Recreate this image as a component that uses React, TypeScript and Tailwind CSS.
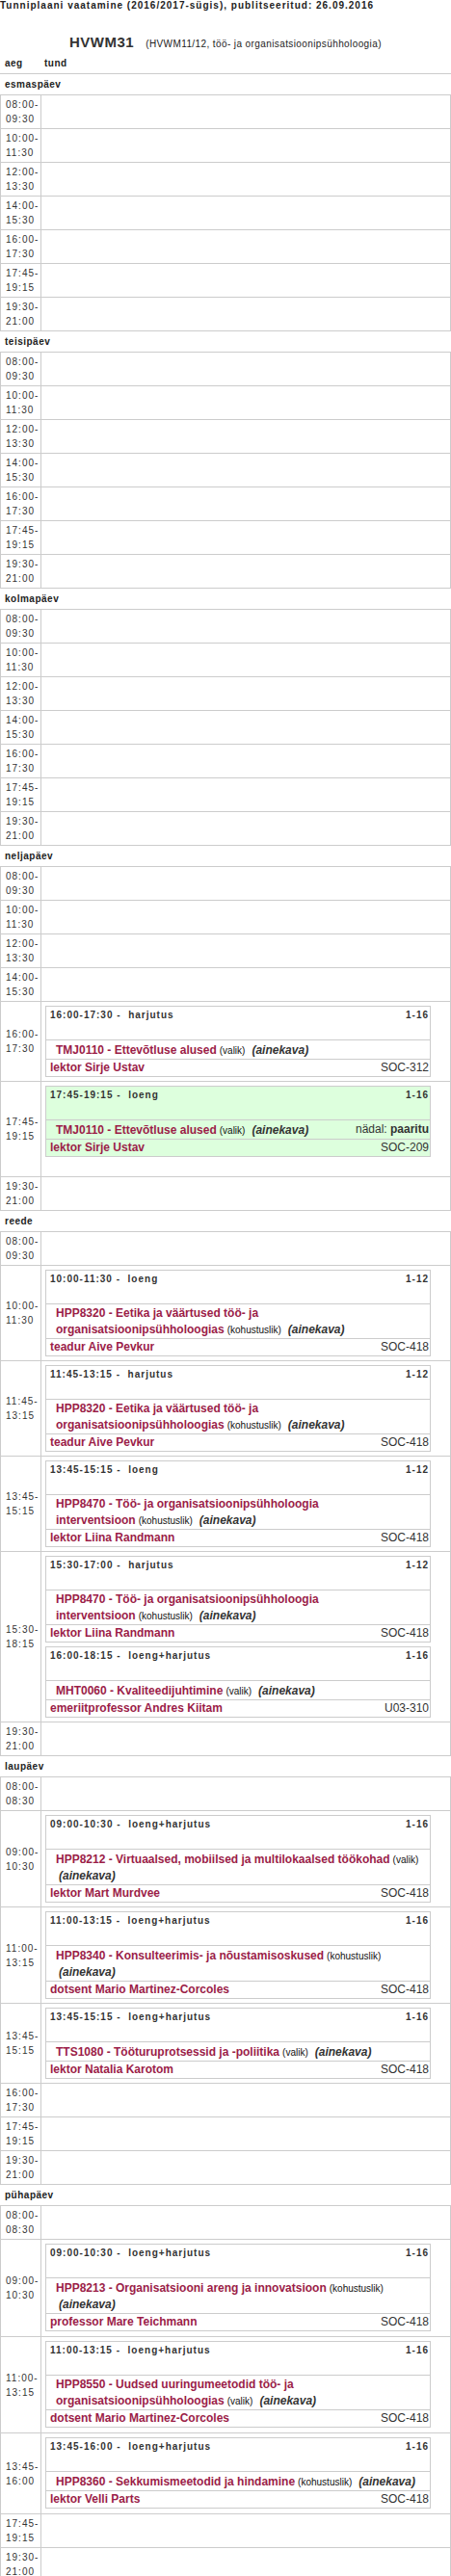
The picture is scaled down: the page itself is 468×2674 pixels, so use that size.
import React from "react";

type CardData = {
  time: string;
  type: string;
  weeks: string;
  l1: string;
  l2?: string;
  kind: string;
  ainekavaBreak?: boolean;
  teacher: string;
  room: string;
  green?: boolean;
  week?: string;
};

type RowData = { a: string; b: string; cards?: CardData[]; pb?: string };

type DayData = { name: string; rows: RowData[] };

const NAME = "font-bold text-[12px] text-[#9b1d48]";

function Kind({ k }: { k: string }) {
  return <span className="text-[10px] leading-[12px] font-normal text-[#111] ml-[3px]">({k})</span>;
}

function Aine({ cls }: { cls: string }) {
  return <span className={`text-[12px] font-bold italic text-[#333] ${cls}`}>(ainekava)</span>;
}

function CourseCell({ d }: { d: CardData }) {
  if (d.l2) {
    return (
      <div className="whitespace-nowrap">
        <div className={NAME}>{d.l1}</div>
        <div>
          <span className={NAME}>{d.l2}</span>
          <Kind k={d.kind} />
          <Aine cls="ml-[7px]" />
        </div>
      </div>
    );
  }
  if (d.ainekavaBreak) {
    return (
      <div className="whitespace-nowrap">
        <div>
          <span className={NAME}>{d.l1}</span>
          <Kind k={d.kind} />
        </div>
        <div className="pl-[3px]">
          <Aine cls="" />
        </div>
      </div>
    );
  }
  return (
    <div className="whitespace-nowrap">
      <span className={NAME}>{d.l1}</span>
      <Kind k={d.kind} />
      <Aine cls="ml-[7px]" />
    </div>
  );
}

function Card({ d }: { d: CardData }) {
  return (
    <div
      className={`ml-[4px] w-[400px] border border-[#cccccc] ${
        d.green ? "bg-[#ddffdd]" : "bg-white"
      }`}
    >
      <div className="h-[35px] flex justify-between items-start pl-[4px] pr-[1px] pt-[1px] text-[10px] leading-[16px] font-bold tracking-[1px] text-[#333] border-b border-[#cccccc]">
        <span className="whitespace-pre">{`${d.time} -  ${d.type}`}</span>
        <span>{d.weeks}</span>
      </div>
      <div className="flex justify-between items-start py-[1px] pl-[10px] pr-[1px] leading-[16px] border-b border-[#cccccc]">
        <CourseCell d={d} />
        {d.week ? (
          <div className="text-[12px] text-[#333] whitespace-nowrap">
            nädal: <span className="font-bold">{d.week}</span>
          </div>
        ) : null}
      </div>
      <div className="flex justify-between pl-[4px] pr-[1px] pb-[1px] leading-[16px] text-[12px]">
        <span className="font-bold text-[#9b1d48]">{d.teacher}</span>
        <span className="text-[#333]">{d.room}</span>
      </div>
    </div>
  );
}

function Row({ r }: { r: RowData }) {
  return (
    <div className="flex border-t border-[#cccccc]">
      <div className="w-[42px] shrink-0 border-r border-[#cccccc] pl-[5px] py-[2px] flex flex-col justify-center text-[10px] leading-[15px] tracking-[1px] text-[#333]">
        <span>{r.a}</span>
        <span>{r.b}</span>
      </div>
      {r.cards ? (
        <div className={`flex-1 pt-[4px] ${r.pb ?? "pb-[4px]"} flex flex-col gap-[4px]`}>
          {r.cards.map((c, i) => (
            <Card key={i} d={c} />
          ))}
        </div>
      ) : (
        <div className="flex-1" />
      )}
    </div>
  );
}

function Day({ d }: { d: DayData }) {
  return (
    <div>
      <div className="h-[21px] pl-[5px] text-[10px] leading-[21px] font-bold tracking-[0.5px] text-[#222]">
        {d.name}
      </div>
      <div className="border-l border-r border-b border-[#cccccc]">
        {d.rows.map((r, i) => (
          <Row key={i} r={r} />
        ))}
      </div>
    </div>
  );
}

const STD: RowData[] = [
  { a: "08:00-", b: "09:30" },
  { a: "10:00-", b: "11:30" },
  { a: "12:00-", b: "13:30" },
  { a: "14:00-", b: "15:30" },
  { a: "16:00-", b: "17:30" },
  { a: "17:45-", b: "19:15" },
  { a: "19:30-", b: "21:00" },
];

const HPP8320 = {
  l1: "HPP8320 - Eetika ja väärtused töö- ja",
  l2: "organisatsioonipsühholoogias",
  kind: "kohustuslik",
};

const HPP8470 = {
  l1: "HPP8470 - Töö- ja organisatsioonipsühholoogia",
  l2: "interventsioon",
  kind: "kohustuslik",
};

const DAYS: DayData[] = [
  { name: "esmaspäev", rows: STD },
  { name: "teisipäev", rows: STD },
  { name: "kolmapäev", rows: STD },
  {
    name: "neljapäev",
    rows: [
      STD[0],
      STD[1],
      STD[2],
      STD[3],
      {
        a: "16:00-",
        b: "17:30",
        cards: [
          {
            time: "16:00-17:30",
            type: "harjutus",
            weeks: "1-16",
            l1: "TMJ0110 - Ettevõtluse alused",
            kind: "valik",
            teacher: "lektor Sirje Ustav",
            room: "SOC-312",
          },
        ],
      },
      {
        a: "17:45-",
        b: "19:15",
        pb: "pb-[20px]",
        cards: [
          {
            time: "17:45-19:15",
            type: "loeng",
            weeks: "1-16",
            l1: "TMJ0110 - Ettevõtluse alused",
            kind: "valik",
            teacher: "lektor Sirje Ustav",
            room: "SOC-209",
            green: true,
            week: "paaritu",
          },
        ],
      },
      STD[6],
    ],
  },
  {
    name: "reede",
    rows: [
      STD[0],
      {
        a: "10:00-",
        b: "11:30",
        cards: [
          {
            time: "10:00-11:30",
            type: "loeng",
            weeks: "1-12",
            ...HPP8320,
            teacher: "teadur Aive Pevkur",
            room: "SOC-418",
          },
        ],
      },
      {
        a: "11:45-",
        b: "13:15",
        cards: [
          {
            time: "11:45-13:15",
            type: "harjutus",
            weeks: "1-12",
            ...HPP8320,
            teacher: "teadur Aive Pevkur",
            room: "SOC-418",
          },
        ],
      },
      {
        a: "13:45-",
        b: "15:15",
        cards: [
          {
            time: "13:45-15:15",
            type: "loeng",
            weeks: "1-12",
            ...HPP8470,
            teacher: "lektor Liina Randmann",
            room: "SOC-418",
          },
        ],
      },
      {
        a: "15:30-",
        b: "18:15",
        cards: [
          {
            time: "15:30-17:00",
            type: "harjutus",
            weeks: "1-12",
            ...HPP8470,
            teacher: "lektor Liina Randmann",
            room: "SOC-418",
          },
          {
            time: "16:00-18:15",
            type: "loeng+harjutus",
            weeks: "1-16",
            l1: "MHT0060 - Kvaliteedijuhtimine",
            kind: "valik",
            teacher: "emeriitprofessor Andres Kiitam",
            room: "U03-310",
          },
        ],
      },
      STD[6],
    ],
  },
  {
    name: "laupäev",
    rows: [
      { a: "08:00-", b: "08:30" },
      {
        a: "09:00-",
        b: "10:30",
        cards: [
          {
            time: "09:00-10:30",
            type: "loeng+harjutus",
            weeks: "1-16",
            l1: "HPP8212 - Virtuaalsed, mobiilsed ja multilokaalsed töökohad",
            kind: "valik",
            ainekavaBreak: true,
            teacher: "lektor Mart Murdvee",
            room: "SOC-418",
          },
        ],
      },
      {
        a: "11:00-",
        b: "13:15",
        cards: [
          {
            time: "11:00-13:15",
            type: "loeng+harjutus",
            weeks: "1-16",
            l1: "HPP8340 - Konsulteerimis- ja nõustamisoskused",
            kind: "kohustuslik",
            ainekavaBreak: true,
            teacher: "dotsent Mario Martinez-Corcoles",
            room: "SOC-418",
          },
        ],
      },
      {
        a: "13:45-",
        b: "15:15",
        cards: [
          {
            time: "13:45-15:15",
            type: "loeng+harjutus",
            weeks: "1-16",
            l1: "TTS1080 - Tööturuprotsessid ja -poliitika",
            kind: "valik",
            teacher: "lektor Natalia Karotom",
            room: "SOC-418",
          },
        ],
      },
      STD[4],
      STD[5],
      STD[6],
    ],
  },
  {
    name: "pühapäev",
    rows: [
      { a: "08:00-", b: "08:30" },
      {
        a: "09:00-",
        b: "10:30",
        pb: "pb-[5px]",
        cards: [
          {
            time: "09:00-10:30",
            type: "loeng+harjutus",
            weeks: "1-16",
            l1: "HPP8213 - Organisatsiooni areng ja innovatsioon",
            kind: "kohustuslik",
            ainekavaBreak: true,
            teacher: "professor Mare Teichmann",
            room: "SOC-418",
          },
        ],
      },
      {
        a: "11:00-",
        b: "13:15",
        pb: "pb-[5px]",
        cards: [
          {
            time: "11:00-13:15",
            type: "loeng+harjutus",
            weeks: "1-16",
            l1: "HPP8550 - Uudsed uuringumeetodid töö- ja",
            l2: "organisatsioonipsühholoogias",
            kind: "valik",
            teacher: "dotsent Mario Martinez-Corcoles",
            room: "SOC-418",
          },
        ],
      },
      {
        a: "13:45-",
        b: "16:00",
        pb: "pb-[5px]",
        cards: [
          {
            time: "13:45-16:00",
            type: "loeng+harjutus",
            weeks: "1-16",
            l1: "HPP8360 - Sekkumismeetodid ja hindamine",
            kind: "kohustuslik",
            teacher: "lektor Velli Parts",
            room: "SOC-418",
          },
        ],
      },
      STD[5],
      STD[6],
    ],
  },
];

export default function App() {
  return (
    <div className="w-[468px] bg-white font-['Liberation_Sans',Arial,sans-serif] text-[#222]">
      <div className="h-[12px] text-[10px] leading-[12px] font-bold tracking-[1px] text-[#222] whitespace-nowrap">
        Tunniplaani vaatamine (2016/2017-sügis), publitseeritud: 26.09.2016
      </div>
      <div className="mt-[23px] h-[18px] pl-[72px] flex items-baseline whitespace-nowrap">
        <span className="text-[15px] leading-[18px] font-bold tracking-[0.5px] text-[#333]">HVWM31</span>
        <span className="ml-[12px] text-[10px] leading-[18px] tracking-[0.4px] text-[#222]">
          (HVWM11/12, töö- ja organisatsioonipsühholoogia)
        </span>
      </div>
      <div className="mt-[7px] h-[17px] flex border-b border-[#cccccc] text-[10px] leading-[12px] font-bold tracking-[0.5px] text-[#222]">
        <span className="w-[42px] pl-[5px]">aeg</span>
        <span className="pl-[4px]">tund</span>
      </div>
      {DAYS.map((d) => (
        <Day key={d.name} d={d} />
      ))}
    </div>
  );
}
